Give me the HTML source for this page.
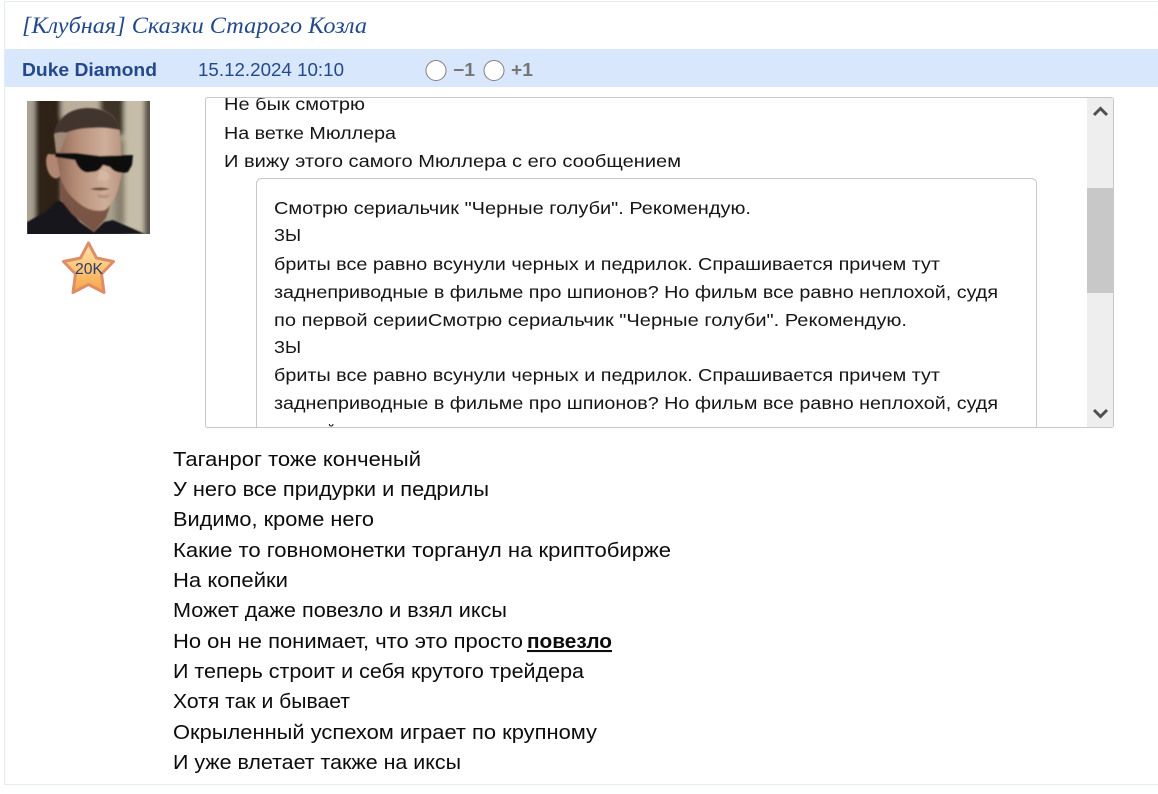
<!DOCTYPE html>
<html lang="ru">
<head>
<meta charset="utf-8">
<title>Сказки Старого Козла</title>
<style>
html,body{margin:0;padding:0;background:#fff;overflow:hidden}
svg{display:block}
.s{font-family:"Liberation Sans","DejaVu Sans",sans-serif;font-size:17.6px;fill:#151515}
.b{font-family:"Liberation Sans","DejaVu Sans",sans-serif;font-size:20.6px;fill:#0c0c0c}
</style>
</head>
<body>
<svg width="1158" height="794" viewBox="0 0 1158 794" xmlns="http://www.w3.org/2000/svg">
<defs>
<clipPath id="box"><rect x="206" y="98" width="881" height="329"/></clipPath>
<clipPath id="av"><rect x="27" y="101" width="123" height="133"/></clipPath>
<filter id="bl" x="-10%" y="-10%" width="120%" height="120%"><feGaussianBlur stdDeviation=".8"/></filter>
<filter id="bl3" x="-20%" y="-20%" width="140%" height="140%"><feGaussianBlur stdDeviation="2.500"/></filter>
<linearGradient id="star" x1="0" y1="0" x2="0" y2="1"><stop offset="0" stop-color="#fde2ae"/><stop offset=".5" stop-color="#fcc777"/><stop offset="1" stop-color="#f7a348"/></linearGradient>
<linearGradient id="skin" x1="0" y1="0" x2="1" y2="0"><stop offset="0" stop-color="#8a6451"/><stop offset=".35" stop-color="#b78f79"/><stop offset=".75" stop-color="#cfae9a"/><stop offset="1" stop-color="#b99680"/></linearGradient>
</defs>

<!-- page frame -->
<rect x="4.5" y="1.5" width="1160" height="783" fill="#fff" stroke="#e1edf3"/>
<text x="22" y="33" font-family="'Liberation Serif',serif" font-style="italic" font-size="23" fill="#24498b" textLength="345" lengthAdjust="spacingAndGlyphs">[Клубная] Сказки Старого Козла</text>

<!-- header bar -->
<rect x="5" y="49" width="1153" height="38" fill="#d9e7fd"/>
<text x="22" y="76" font-family="'Liberation Sans',sans-serif" font-weight="700" font-size="18.500" fill="#24498b" textLength="135" lengthAdjust="spacingAndGlyphs">Duke Diamond</text>
<text x="198" y="76" font-family="'Liberation Sans',sans-serif" font-size="18.500" fill="#24498b" textLength="146" lengthAdjust="spacingAndGlyphs">15.12.2024 10:10</text>
<circle cx="436" cy="70.5" r="10" fill="#fff" stroke="#808080"/>
<text x="453" y="76" font-family="'Liberation Sans',sans-serif" font-weight="700" font-size="18" fill="#757575" textLength="22" lengthAdjust="spacingAndGlyphs">−1</text>
<circle cx="494" cy="70.5" r="10" fill="#fff" stroke="#808080"/>
<text x="511" y="76" font-family="'Liberation Sans',sans-serif" font-weight="700" font-size="18" fill="#757575" textLength="22" lengthAdjust="spacingAndGlyphs">+1</text>

<!-- avatar -->
<g clip-path="url(#av)">
<rect x="27" y="101" width="123" height="133" fill="#a89f8d"/>
<g filter="url(#bl3)">
<rect x="20" y="95" width="15" height="145" fill="#aaa393"/>
<rect x="35" y="95" width="26" height="145" fill="#2d2418"/>
<rect x="61" y="95" width="40" height="22" fill="#b9af9b"/>
<rect x="100" y="95" width="24" height="40" fill="#3c3226"/>
<rect x="124" y="95" width="20" height="140" fill="#c6bda9"/>
<rect x="115" y="140" width="10" height="85" fill="#8a806e"/>
<rect x="144" y="95" width="12" height="145" fill="#5a5346"/>
</g>
<g filter="url(#bl)">
<path d="M27 222 L45 212 L58 200 L64 203 L80 222 L94 232 L104 222 L113 220 L145 234 L27 236Z" fill="#16171a"/>
<path d="M60 180 L61 200 L72 214 L94 232 L106 218 L110 205 L80 180Z" fill="#7a5544"/>
<path d="M48 154 C44 160 47 172 51 176 C55 180 60 179 61 173 L61 155Z" fill="#b28771"/>
<path d="M54 135 C56 118 72 108 90 108 C108 108 118 118 120 131 L122 172 C119 190 114 203 105 210 C97 212 88 210 80 204 C70 196 64 190 60 176 L56 152Z" fill="url(#skin)"/>
<path d="M54 134 C58 116 72 108 88 108 C106 108 117 116 120 130 C110 128 100 127 92 128 C82 128 72 130 66 133Z" fill="#43362e"/>
<path d="M54 134 C58 132 62 132 68 133 C64 140 62 146 60 152 L56 152Z" fill="#a08a78"/>
<path d="M55 153 L76 153 L100 156 L133 155 L132 165 L128 172 C120 174 114 172 110 167 L103 165 C100 170 97 172 91 172 C83 174 78 168 75 160 L55 157Z" fill="#0b0a0b"/>
<path d="M90 189 Q100 186 110 189 Q100 192 90 189Z" fill="#6a473c"/>
<path d="M97 194 Q104 196 110 194 L108 198 L99 198Z" fill="#b08572" opacity=".7"/>
<path d="M100 170 L107 172 L110 178 L105 181 L97 180Z" fill="#dcbcaa" opacity=".7"/>
</g>
</g>

<!-- star -->
<path d="M88.500 243 L96.500 258 L113.500 261.500 L101.500 274 L104 292.500 L88.500 284.500 L73 292.500 L75.500 274 L63.500 261.500 L80.500 258Z" fill="url(#star)" stroke="#dd8e68" stroke-width="3" stroke-linejoin="round"/>
<text x="75" y="274" font-family="'Liberation Sans',sans-serif" font-size="16" fill="#2c3a70" textLength="28" lengthAdjust="spacingAndGlyphs">20K</text>

<!-- quote box -->
<rect x="205.500" y="97.500" width="908" height="330" rx="2" fill="#fff" stroke="#c8c8c8"/>
<g clip-path="url(#box)">
<text class="s" x="224" y="110" textLength="141" lengthAdjust="spacingAndGlyphs">Не бык смотрю</text>
<text class="s" x="224" y="139" textLength="172" lengthAdjust="spacingAndGlyphs">На ветке Мюллера</text>
<text class="s" x="224" y="167" textLength="457" lengthAdjust="spacingAndGlyphs">И вижу этого самого Мюллера с его сообщением</text>
<rect x="256.500" y="178.500" width="780" height="300" rx="5" fill="#fff" stroke="#c8c8c8"/>
<text class="s" x="274" y="214" textLength="477" lengthAdjust="spacingAndGlyphs">Смотрю сериальчик "Черные голуби". Рекомендую.</text>
<text class="s" x="274" y="241" textLength="27" lengthAdjust="spacingAndGlyphs">ЗЫ</text>
<text class="s" x="274" y="270" textLength="666" lengthAdjust="spacingAndGlyphs">бриты все равно всунули черных и педрилок. Спрашивается причем тут</text>
<text class="s" x="274" y="298" textLength="724" lengthAdjust="spacingAndGlyphs">заднеприводные в фильме про шпионов? Но фильм все равно неплохой, судя</text>
<text class="s" x="274" y="326" textLength="633" lengthAdjust="spacingAndGlyphs">по первой серииСмотрю сериальчик "Черные голуби". Рекомендую.</text>
<text class="s" x="274" y="353" textLength="27" lengthAdjust="spacingAndGlyphs">ЗЫ</text>
<text class="s" x="274" y="381" textLength="666" lengthAdjust="spacingAndGlyphs">бриты все равно всунули черных и педрилок. Спрашивается причем тут</text>
<text class="s" x="274" y="409" textLength="724" lengthAdjust="spacingAndGlyphs">заднеприводные в фильме про шпионов? Но фильм все равно неплохой, судя</text>
<text class="s" x="274" y="437" textLength="100" lengthAdjust="spacingAndGlyphs">по первой серии</text>
</g>
<!-- scrollbar -->
<rect x="1087" y="98" width="26" height="329" fill="#eeeeee"/>
<rect x="1087" y="188" width="26" height="105" fill="#c8c8c8"/>
<path d="M1094 115 L1100.500 108.500 L1107 115" fill="none" stroke="#505050" stroke-width="3"/>
<path d="M1094 410 L1100.500 416.500 L1107 410" fill="none" stroke="#505050" stroke-width="3"/>

<!-- body -->
<text class="b" x="173" y="466" textLength="248" lengthAdjust="spacingAndGlyphs">Таганрог тоже конченый</text>
<text class="b" x="173" y="496" textLength="316" lengthAdjust="spacingAndGlyphs">У него все придурки и педрилы</text>
<text class="b" x="173" y="526" textLength="201" lengthAdjust="spacingAndGlyphs">Видимо, кроме него</text>
<text class="b" x="173" y="557" textLength="498" lengthAdjust="spacingAndGlyphs">Какие то говномонетки торганул на криптобирже</text>
<text class="b" x="173" y="587" textLength="115" lengthAdjust="spacingAndGlyphs">На копейки</text>
<text class="b" x="173" y="617" textLength="334" lengthAdjust="spacingAndGlyphs">Может даже повезло и взял иксы</text>
<text class="b" x="173" y="648" textLength="350" lengthAdjust="spacingAndGlyphs">Но он не понимает, что это просто</text>
<text class="b" x="527" y="648" style="font-weight:700" text-decoration="underline" textLength="85" lengthAdjust="spacingAndGlyphs">повезло</text>
<text class="b" x="173" y="678" textLength="411" lengthAdjust="spacingAndGlyphs">И теперь строит и себя крутого трейдера</text>
<text class="b" x="173" y="708" textLength="177" lengthAdjust="spacingAndGlyphs">Хотя так и бывает</text>
<text class="b" x="173" y="739" textLength="424" lengthAdjust="spacingAndGlyphs">Окрыленный успехом играет по крупному</text>
<text class="b" x="173" y="769" textLength="288" lengthAdjust="spacingAndGlyphs">И уже влетает также на иксы</text>
</svg>
</body>
</html>
